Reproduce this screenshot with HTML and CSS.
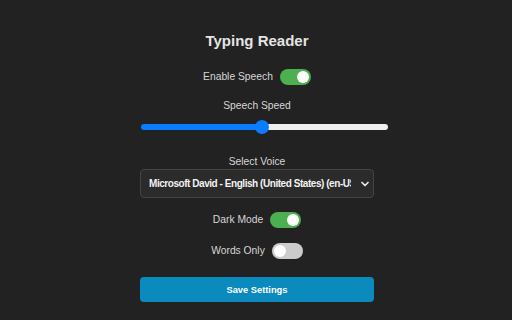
FILE: index.html
```html
<!DOCTYPE html>
<html lang="en">
  <head>
    <meta charset="UTF-8" />
    <meta name="viewport" content="width=device-width, initial-scale=1.0" />
    <title>Typing Reader</title>
    <link rel="stylesheet" href="styles.css">
  </head>
  <body>
    <div class="popup">
      <h1 class="title">Typing Reader</h1>

      <div class="row">
        <span class="label">Enable Speech</span>
        <label class="switch">
          <input type="checkbox" checked />
          <span class="slider"></span>
        </label>
      </div>

      <div class="field speed-field">
        <span class="label">Speech Speed</span>
        <input type="range" class="speed" min="0" max="100" value="49" />
      </div>

      <div class="field voice-field">
        <span class="label">Select Voice</span>
        <div class="select-wrap">
          <select class="voice">
            <option>Microsoft David - English (United States) (en-US)</option>
          </select>
          <svg class="chevron" width="10" height="10" viewBox="0 0 10 10">
            <path d="M2 3.5 L5 6.5 L8 3.5" fill="none" stroke="#e8e8e8" stroke-width="1.7" stroke-linecap="round" stroke-linejoin="round" />
          </svg>
        </div>
      </div>

      <div class="row">
        <span class="label">Dark Mode</span>
        <label class="switch">
          <input type="checkbox" checked />
          <span class="slider"></span>
        </label>
      </div>

      <div class="row">
        <span class="label">Words Only</span>
        <label class="switch">
          <input type="checkbox" />
          <span class="slider"></span>
        </label>
      </div>

      <button class="save-btn">Save Settings</button>
    </div>
  </body>
</html>
```

FILE: styles.css
```css
body {
  font-family: Arial, "Liberation Sans", sans-serif;
  margin: 0;
  padding: 0;
  background-color: #222222;
  color: #dddddd;
  display: flex;
  justify-content: center;
}

.popup {
  width: 234px;
  margin-left: 2px;
  padding-top: 32px;
  display: flex;
  flex-direction: column;
  align-items: center;
}

.title {
  font-size: 15px;
  font-weight: bold;
  margin: 0 0 18px;
  line-height: 18px;
  color: #e4e4e4;
}

.label {
  font-size: 10.3px;
  color: #d6d6d6;
}

.row {
  display: flex;
  align-items: center;
  gap: 7px;
  height: 17px;
  margin-bottom: 14px;
}

.field {
  display: flex;
  flex-direction: column;
  align-items: center;
  width: 100%;
  margin-bottom: 14px;
}

.switch {
  position: relative;
  display: inline-block;
  width: 31px;
  height: 16px;
}

.switch input {
  opacity: 0;
  width: 0;
  height: 0;
}

.slider {
  position: absolute;
  inset: 0;
  background-color: #cccccc;
  border-radius: 8px;
}

.slider::before {
  content: "";
  position: absolute;
  width: 12px;
  height: 12px;
  left: 2px;
  top: 2px;
  background-color: white;
  border-radius: 50%;
}

.switch input:checked + .slider {
  background-color: #4caf50;
}

.switch input:checked + .slider::before {
  left: 17px;
}

.speed-field {
  margin-top: 1px;
  margin-bottom: 26px;
}

.speed {
  -webkit-appearance: none;
  appearance: none;
  width: 247px;
  height: 6px;
  margin: 13px 0 0 14px;
  border-radius: 3px;
  background: linear-gradient(to right, #0a7cff 0%, #0a7cff 50%, #efefef 50%, #efefef 100%);
  outline: none;
}

.speed::-webkit-slider-thumb {
  -webkit-appearance: none;
  appearance: none;
  width: 14px;
  height: 14px;
  border-radius: 50%;
  background: #0a7cff;
  border: none;
}

.voice-field {
  margin-bottom: 13px;
}

.voice-field .label {
  margin-bottom: 2px;
}

.select-wrap {
  position: relative;
  width: 100%;
}

.voice {
  -webkit-appearance: none;
  appearance: none;
  width: 100%;
  height: 29px;
  padding: 0 22px 0 8px;
  background-color: #2b2b2b;
  color: #f2f2f2;
  border: 1px solid #444444;
  border-radius: 4px;
  font-family: Arial, "Liberation Sans", sans-serif;
  font-size: 10px;
  font-weight: bold;
  letter-spacing: -0.45px;
}

.chevron {
  position: absolute;
  right: 4px;
  top: 10px;
}

.save-btn {
  width: 100%;
  height: 25px;
  margin-top: 4px;
  background-color: #0a8abd;
  color: white;
  border: none;
  border-radius: 4px;
  font-family: Arial, "Liberation Sans", sans-serif;
  font-size: 9.3px;
  font-weight: bold;
}
```
